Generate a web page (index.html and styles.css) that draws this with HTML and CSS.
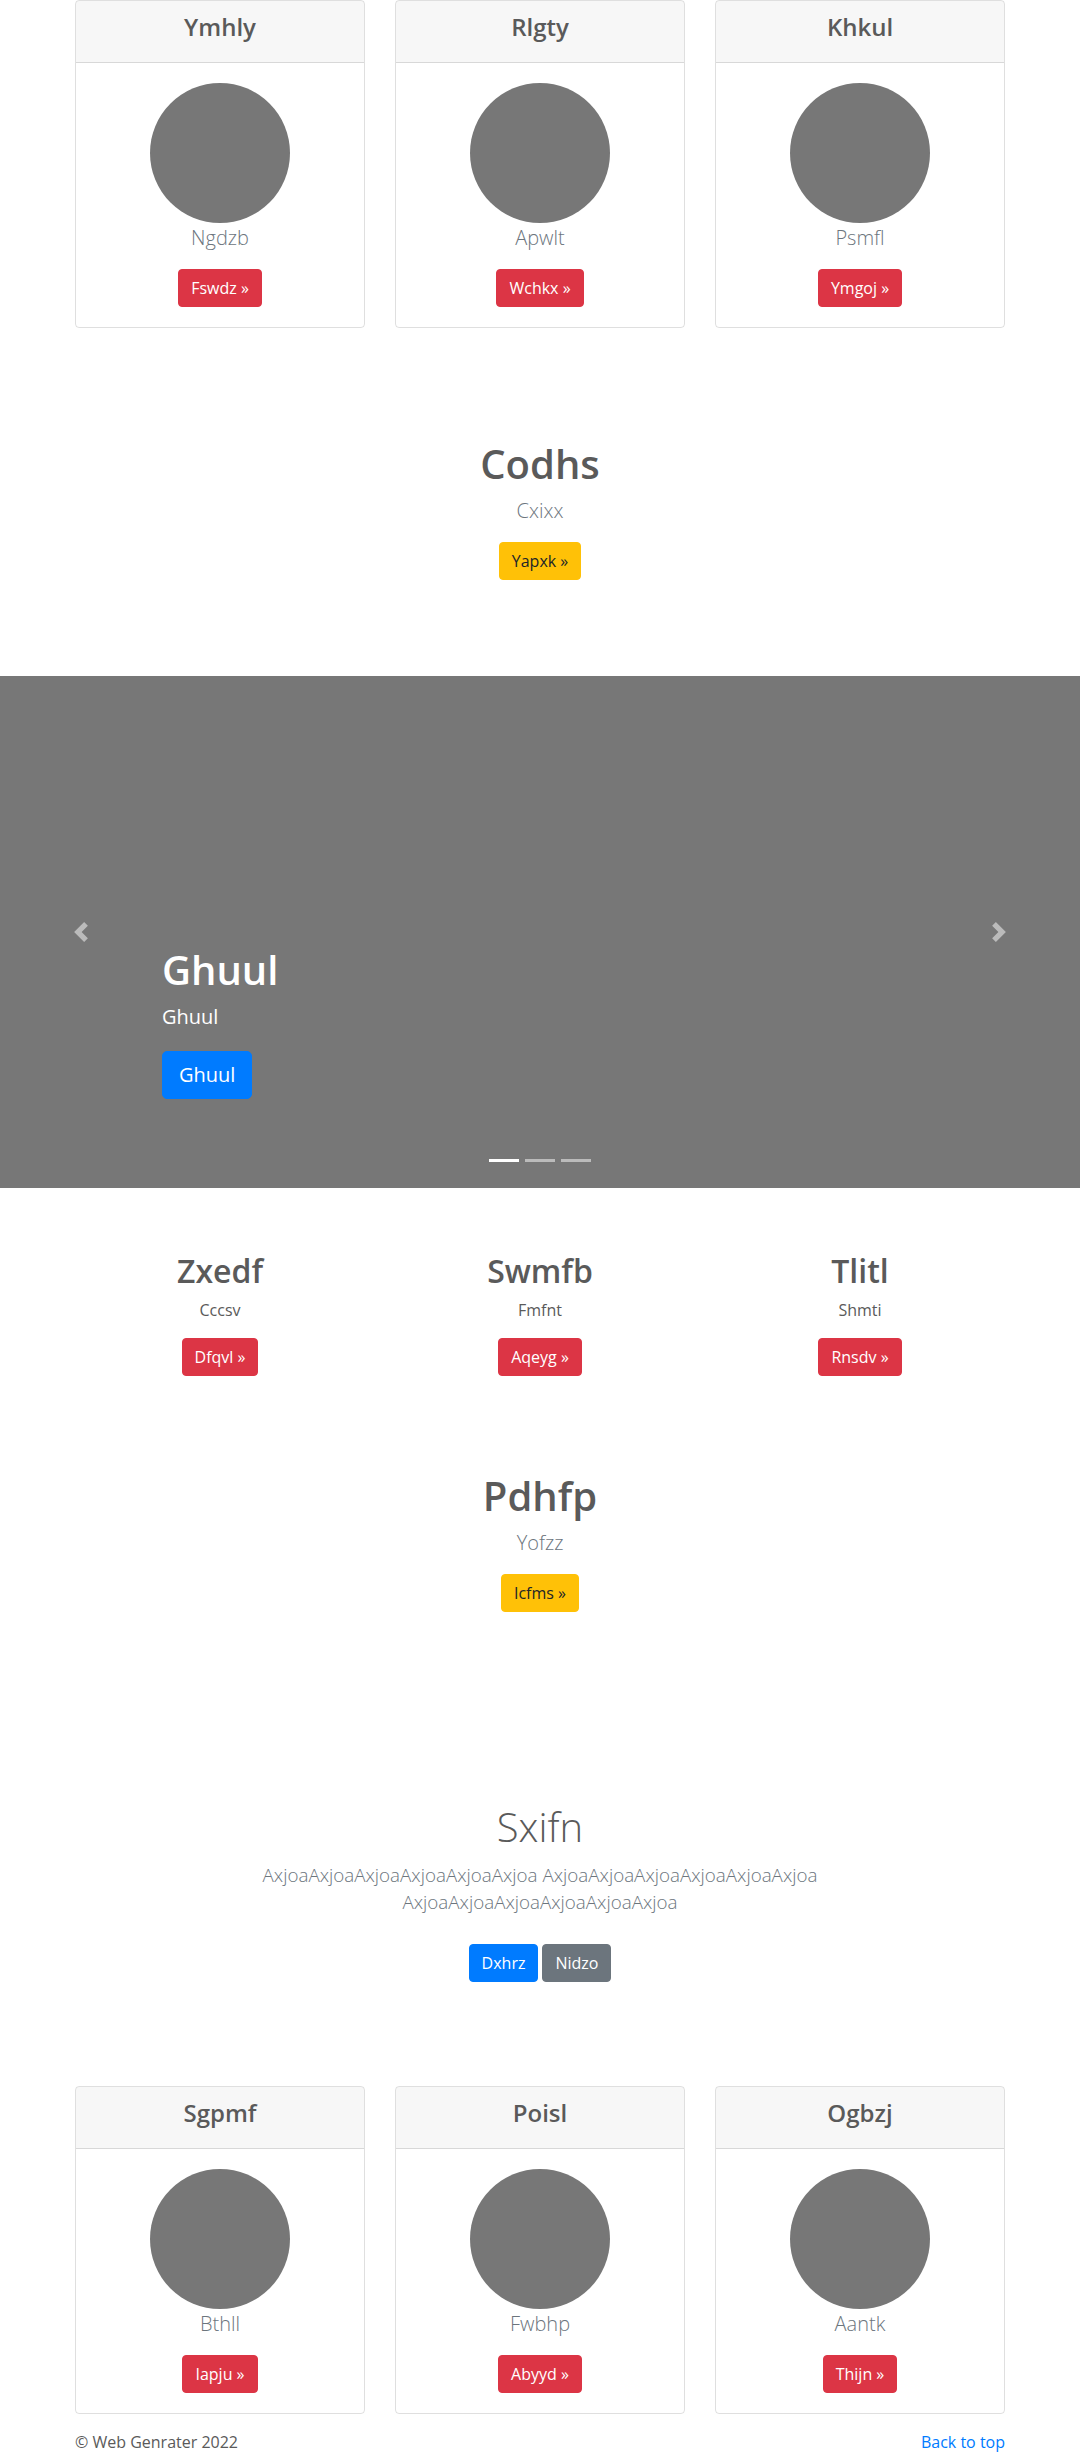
FILE: index.html
```html
<!DOCTYPE html>
<html lang="en">
<head>
<meta charset="utf-8">
<title>Web Genrater</title>
<link rel="stylesheet" href="styles.css">
</head>
<body>
<main>
  <section class="container card-row top-cards">
    <div class="card">
      <div class="card-header"><h4>Ymhly</h4></div>
      <div class="card-body">
        <div class="avatar"></div>
        <p class="lead muted">Ngdzb</p>
        <a class="btn btn-danger" href="#">Fswdz »</a>
      </div>
    </div>
    <div class="card">
      <div class="card-header"><h4>Rlgty</h4></div>
      <div class="card-body">
        <div class="avatar"></div>
        <p class="lead muted">Apwlt</p>
        <a class="btn btn-danger" href="#">Wchkx »</a>
      </div>
    </div>
    <div class="card">
      <div class="card-header"><h4>Khkul</h4></div>
      <div class="card-body">
        <div class="avatar"></div>
        <p class="lead muted">Psmfl</p>
        <a class="btn btn-danger" href="#">Ymgoj »</a>
      </div>
    </div>
  </section>

  <section class="container hero hero-first">
    <h1>Codhs</h1>
    <p class="lead muted">Cxixx</p>
    <a class="btn btn-warning" href="#">Yapxk »</a>
  </section>

  <section class="carousel">
    <a class="carousel-control prev" href="#">
      <svg width="20" height="20" viewBox="0 0 8 8" aria-hidden="true"><path d="M5.25 0l-4 4 4 4 1.5-1.5L4.25 4l2.5-2.5L5.25 0z"/></svg>
    </a>
    <div class="carousel-caption">
      <h1>Ghuul</h1>
      <p>Ghuul</p>
      <a class="btn btn-lg btn-primary" href="#">Ghuul</a>
    </div>
    <a class="carousel-control next" href="#">
      <svg width="20" height="20" viewBox="0 0 8 8" aria-hidden="true"><path d="M2.75 0l-1.5 1.5L3.75 4l-2.5 2.5L2.75 8l4-4-4-4z"/></svg>
    </a>
    <ol class="carousel-indicators">
      <li class="active"></li>
      <li></li>
      <li></li>
    </ol>
  </section>

  <section class="container card-row marketing">
    <div class="col">
      <h2>Zxedf</h2>
      <p>Cccsv</p>
      <a class="btn btn-danger" href="#">Dfqvl »</a>
    </div>
    <div class="col">
      <h2>Swmfb</h2>
      <p>Fmfnt</p>
      <a class="btn btn-danger" href="#">Aqeyg »</a>
    </div>
    <div class="col">
      <h2>Tlitl</h2>
      <p>Shmti</p>
      <a class="btn btn-danger" href="#">Rnsdv »</a>
    </div>
  </section>

  <section class="container hero hero-second">
    <h1>Pdhfp</h1>
    <p class="lead muted">Yofzz</p>
    <a class="btn btn-warning" href="#">Icfms »</a>
  </section>

  <section class="container jumbo">
    <h1>Sxifn</h1>
    <p class="jumbo-lead">AxjoaAxjoaAxjoaAxjoaAxjoaAxjoa AxjoaAxjoaAxjoaAxjoaAxjoaAxjoa AxjoaAxjoaAxjoaAxjoaAxjoaAxjoa</p>
    <div class="actions">
      <a class="btn btn-primary" href="#">Dxhrz</a>
      <a class="btn btn-secondary" href="#">Nidzo</a>
    </div>
  </section>

  <section class="container card-row bottom-cards">
    <div class="card">
      <div class="card-header"><h4>Sgpmf</h4></div>
      <div class="card-body">
        <div class="avatar"></div>
        <p class="lead muted">Bthll</p>
        <a class="btn btn-danger" href="#">Iapju »</a>
      </div>
    </div>
    <div class="card">
      <div class="card-header"><h4>Poisl</h4></div>
      <div class="card-body">
        <div class="avatar"></div>
        <p class="lead muted">Fwbhp</p>
        <a class="btn btn-danger" href="#">Abyyd »</a>
      </div>
    </div>
    <div class="card">
      <div class="card-header"><h4>Ogbzj</h4></div>
      <div class="card-body">
        <div class="avatar"></div>
        <p class="lead muted">Aantk</p>
        <a class="btn btn-danger" href="#">Thijn »</a>
      </div>
    </div>
  </section>
</main>
<footer class="container footer">
  <p>© Web Genrater 2022</p>
  <a href="#" class="back-top">Back to top</a>
</footer>
</body>
</html>
```
FILE: styles.css
```css
* { box-sizing: border-box; }

body {
  margin: 0;
  font-family: "Open Sans", "Noto Sans", "Liberation Sans", sans-serif;
  font-size: 16px;
  line-height: 1.5;
  color: #5a5a5a;
  background: #fff;
}

h1, h2, h4, p { margin: 0; }

.container {
  width: 960px;
  margin: 0 auto;
  padding: 0 15px;
}

.card-row {
  display: grid;
  grid-template-columns: repeat(3, 1fr);
  column-gap: 30px;
}

/* cards */
.card {
  border: 1px solid rgba(0, 0, 0, .125);
  border-radius: 4px;
  text-align: center;
  overflow: hidden;
}
.card-header {
  background: rgba(0, 0, 0, .03);
  border-bottom: 1px solid rgba(0, 0, 0, .125);
  padding: 12px 20px;
}
.card-header h4 {
  font-size: 24px;
  line-height: 1.2;
  font-weight: 600;
  margin-bottom: 8px;
}
.card-body {
  padding: 20px;
  display: flex;
  flex-direction: column;
  align-items: center;
}
.avatar {
  width: 140px;
  height: 140px;
  border-radius: 50%;
  background: #777;
}

.lead {
  font-size: 20px;
  line-height: 30px;
  font-weight: 300;
}
.muted { color: #6c757d; }
.card-body .lead { margin-bottom: 16px; }

/* buttons */
.btn {
  display: inline-block;
  font-size: 16px;
  line-height: 24px;
  padding: 6px 12px;
  border: 1px solid transparent;
  border-radius: 4px;
  text-decoration: none;
  color: #fff;
  white-space: nowrap;
}
.btn-lg {
  font-size: 20px;
  line-height: 30px;
  padding: 8px 16px;
  border-radius: 5px;
}
.btn-danger { background: #dc3545; border-color: #dc3545; }
.btn-warning { background: #ffc107; border-color: #ffc107; color: #212529; }
.btn-primary { background: #007bff; border-color: #007bff; }
.btn-secondary { background: #6c757d; border-color: #6c757d; }

/* hero blocks */
.hero {
  display: flex;
  flex-direction: column;
  align-items: center;
  text-align: center;
}
.hero h1 {
  font-size: 40px;
  line-height: 48px;
  font-weight: 600;
  margin-bottom: 8px;
}
.hero .lead { margin-bottom: 16px; }
.hero-first { padding-top: 112px; padding-bottom: 96px; }
.hero-second { padding-top: 96px; }

/* carousel */
.carousel {
  position: relative;
  height: 512px;
  background: #777;
}
.carousel-control {
  position: absolute;
  top: 0;
  bottom: 0;
  width: 15%;
  display: flex;
  align-items: center;
  justify-content: center;
}
.carousel-control.prev { left: 0; }
.carousel-control.next { right: 0; }
.carousel-control svg { fill: rgba(255, 255, 255, .5); }
.carousel-caption {
  position: absolute;
  left: 15%;
  right: 15%;
  bottom: 89px;
  color: #fff;
  text-align: left;
}
.carousel-caption h1 {
  font-size: 40px;
  line-height: 48px;
  font-weight: 600;
  margin-bottom: 8px;
}
.carousel-caption p {
  font-size: 20px;
  line-height: 30px;
  margin-bottom: 19px;
}
.carousel-indicators {
  position: absolute;
  left: 15%;
  right: 15%;
  bottom: 26px;
  margin: 0;
  padding: 0;
  list-style: none;
  display: flex;
  justify-content: center;
}
.carousel-indicators li {
  width: 30px;
  height: 3px;
  margin: 0 3px;
  background: rgba(255, 255, 255, .5);
}
.carousel-indicators li.active { background: #fff; }

/* marketing columns */
.marketing { margin-top: 64px; }
.marketing .col {
  display: flex;
  flex-direction: column;
  align-items: center;
  text-align: center;
}
.marketing h2 {
  font-size: 32px;
  line-height: 38.4px;
  font-weight: 600;
  margin-bottom: 8px;
}
.marketing p { margin-bottom: 16px; }

/* jumbotron */
.jumbo {
  padding-top: 191px;
  text-align: center;
}
.jumbo h1 {
  font-size: 40px;
  line-height: 48px;
  font-weight: 300;
  margin-bottom: 11px;
}
.jumbo-lead {
  max-width: 610px;
  margin: 0 auto 28px;
  font-size: 18.8px;
  line-height: 27px;
  font-weight: 300;
  color: #6c757d;
}
.actions {
  display: flex;
  justify-content: center;
  gap: 4px;
}

.bottom-cards { margin-top: 104px; }

/* footer */
.footer {
  display: flex;
  justify-content: space-between;
  padding-top: 16px;
}
.back-top {
  color: #007bff;
  text-decoration: none;
}
```
